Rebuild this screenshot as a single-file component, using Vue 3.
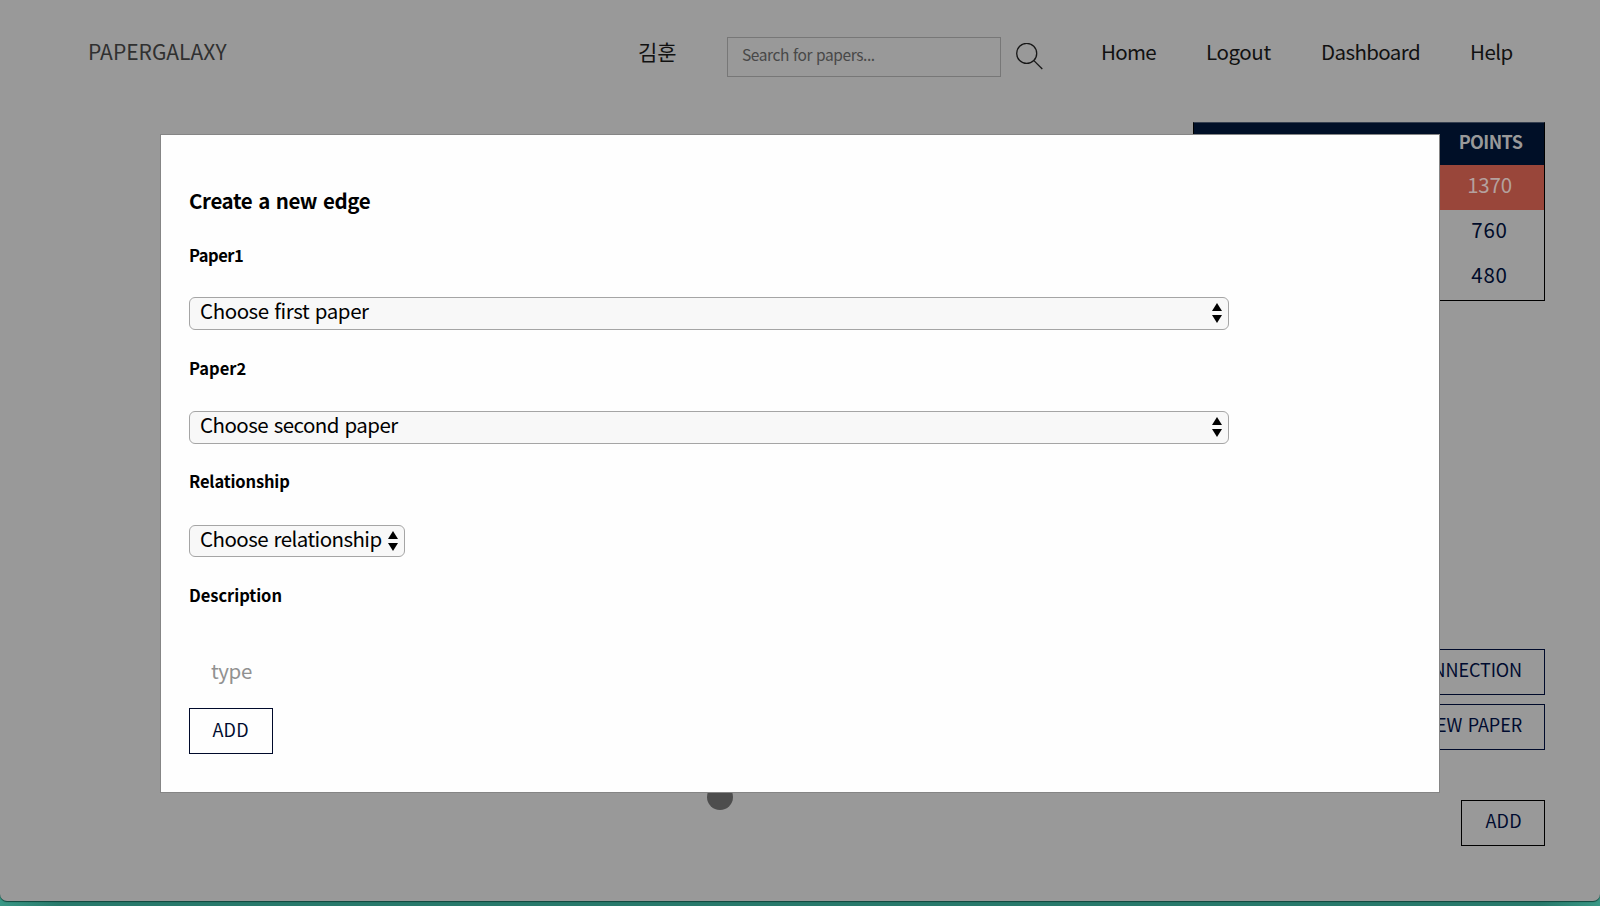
<script setup>
const links = [
  { label: 'Home', cls: 'home' },
  { label: 'Logout', cls: 'logout' },
  { label: 'Dashboard', cls: 'dashboard' },
  { label: 'Help', cls: 'help' },
]
const fields = [
  { label: 'Paper1', placeholder: 'Choose first paper', cls: 'first' },
  { label: 'Paper2', placeholder: 'Choose second paper', cls: 'second' },
  { label: 'Relationship', placeholder: 'Choose relationship', cls: 'relationship' },
]
const points = [1370, 760, 480]
</script>

<template>
  <div class="desktop">
    <div class="window">
      <header class="header">
        <span class="brand">PAPERGALAXY</span>
        <span class="user">김훈</span>
        <div class="search"><span>Search for papers...</span></div>
        <svg class="search-icon" width="28" height="28" viewBox="0 0 28 28" fill="none" stroke="#171717" stroke-width="1.3">
          <circle cx="10.7" cy="10.4" r="10" />
          <path d="M17.9 17.6L26.3 26" />
        </svg>
        <nav class="nav">
          <span v-for="l in links" :key="l.label" :class="l.cls">{{ l.label }}</span>
        </nav>
      </header>

      <main class="canvas">
        <div class="ranking">
          <div class="row head"><span>POINTS</span></div>
          <div v-for="(p, i) in points" :key="p" class="row" :class="{ top: i === 0 }"><span>{{ p }}</span></div>
        </div>
        <div class="actions">
          <div class="btn wide"><span>NEW CONNECTION</span></div>
          <div class="btn wide"><span>NEW PAPER</span></div>
          <div class="btn add"><span>ADD</span></div>
        </div>
        <i class="node"></i>
      </main>
    </div>

    <section class="modal">
      <h2>Create a new edge</h2>
      <div v-for="f in fields" :key="f.label" class="field" :class="f.cls">
        <label>{{ f.label }}</label>
        <div class="select">
          <span>{{ f.placeholder }}</span>
          <svg width="10" height="20" viewBox="0 0 10 20"><path d="M5 0L10 8H0zM5 20L0 12H10z" /></svg>
        </div>
      </div>
      <label class="desc">Description</label>
      <div class="type"><span>type</span></div>
      <div class="btn add"><span>ADD</span></div>
    </section>
  </div>
</template>

<style>
body { margin: 0; overflow: hidden; }
</style>

<style scoped>
* { box-sizing: border-box; }
.desktop {
  position: relative;
  width: 1600px;
  height: 906px;
  overflow: hidden;
  background: linear-gradient(90deg, #399785 0, #28796b 60px, #28796b 1540px, #399785 1600px);
  font-family: "Noto Sans CJK KR", "Noto Sans", sans-serif;
  font-size: 20.5px;
  line-height: 30px;
  color: #111;
  white-space: nowrap;
}
.window {
  height: 901px;
  background: #999;
  border-radius: 0 0 7px 7px;
  box-shadow: 0 1px 1px #11483e;
}
.header { display: flex; height: 122px; padding: 37px 87px 0; align-items: flex-start; }
.brand { width: 551px; padding-left: 1px; color: #303030; font-size: 21px; line-height: 29px; }
.user { width: 89px; font-size: 21px; line-height: 28px; }
.search { width: 274px; height: 40px; border: 1px solid #777; padding: 1px 14px; font-size: 15.5px; letter-spacing: -0.42px; word-spacing: 1px; color: #484848; }
.search-icon { margin: 6px 0 0 15px; }
.nav { display: flex; margin-left: 57px; line-height: 28px; }
.home { width: 105px; letter-spacing: -0.7px; }
.logout { width: 115px; letter-spacing: -0.4px; }
.dashboard { width: 149px; letter-spacing: -0.6px; }
.help { width: 42px; letter-spacing: -0.5px; }
.canvas { position: relative; padding: 0 55px 0 0; }
.ranking { width: 352px; height: 179px; margin: 0 0 0 auto; border: 1px solid #000; border-top: 1px solid #353f50; }
.row { height: 45px; padding: 4px 2px 0 0; display: flex; justify-content: flex-end; color: #000b2a; letter-spacing: 0.8px; }
.row span { width: 105px; text-align: center; }
.row.head { height: 42px; background: #000f27; color: #999; font-weight: 700; font-size: 18px; padding: 3px 1px 0 0; letter-spacing: -0.6px; }
.row.top { background: #99463a; color: #b4a19e; letter-spacing: -0.2px; }
.actions { display: flex; flex-direction: column; align-items: flex-end; margin-top: 348px; }
.btn { display: flex; justify-content: flex-end; height: 46px; border: 1px solid #000a2b; padding: 4px 22px 0; font-size: 18px; color: #000b2f; }
.btn.wide { width: 190px; margin-bottom: 9px; }
.btn.wide span { word-spacing: 1.5px; letter-spacing: -0.1px; }
.btn.add { width: 84px; letter-spacing: 0.3px; }
.actions .add { margin-top: 41px; border-color: #000; }
.node { position: absolute; left: 707px; top: 662px; width: 26px; height: 26px; border-radius: 50%; background: #4d4d4d; }
.modal {
  position: absolute;
  left: 160px;
  top: 134px;
  width: 1280px;
  height: 659px;
  padding: 50px 28px 0;
  border: 1px solid #858585;
  background: #fefefe;
  color: #000;
}
h2 { margin: 0 0 24px; font-size: 20.5px; line-height: 30px; font-weight: 600; letter-spacing: -0.38px; word-spacing: 1.5px; }
label { display: block; height: 30px; font-size: 16.5px; line-height: 31px; font-weight: 600; }
.field { height: 114px; }
.first label { line-height: 32px; letter-spacing: -0.5px; }
.relationship label { line-height: 28px; letter-spacing: -0.15px; }
.relationship { height: 113px; }
label.desc { line-height: 31px; letter-spacing: -0.05px; }
.select {
  display: flex;
  justify-content: space-between;
  width: 1040px;
  height: 33px;
  margin-top: 28px;
  padding: 0 6px 0 10px;
  border: 1px solid #a5a5a5;
  border-radius: 6px;
  background: #f8f8f8;
  line-height: 25px;
}
.select svg { flex: none; margin-top: 5px; }
.select span { word-spacing: 1.5px; }
.first .select span { letter-spacing: -0.44px; }
.second .select span { letter-spacing: -0.54px; }
.relationship .select span { letter-spacing: -0.56px; }
.relationship .select { width: 216px; height: 32px; line-height: 24px; }
.type { height: 98px; padding: 45px 22px 0; color: #919191; letter-spacing: -0.4px; }
.modal .btn { height: 46px; padding-top: 5px; padding-right: 23px; }
</style>
